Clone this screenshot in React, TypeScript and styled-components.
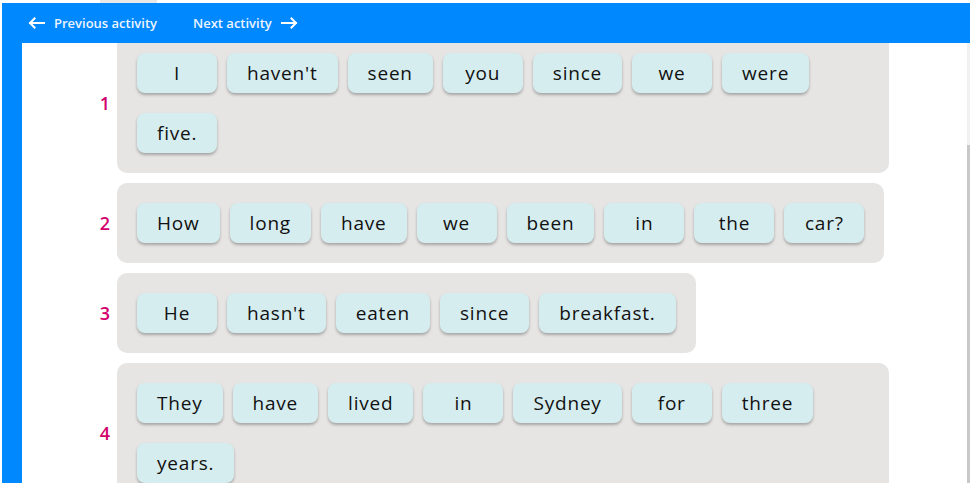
import React from "react";
import styled, { createGlobalStyle } from "styled-components";

const GlobalStyle = createGlobalStyle`
  html, body {
    margin: 0;
    padding: 0;
    background: #ffffff;
    overflow: hidden;
    font-family: "Open Sans", sans-serif;
  }
`;

const TopStrip = styled.div`
  height: 3px;
  display: flex;
`;

const StripTab = styled.div`
  margin-left: 100px;
  width: 57px;
  background: #e8e8e8;
`;

const Frame = styled.div`
  margin-left: 2px;
  height: 480px;
  background: #0088ff;
  display: flex;
  flex-direction: column;
`;

const Header = styled.div`
  height: 40px;
  flex: none;
  display: flex;
  align-items: center;
  padding-left: 26px;
  gap: 36px;
  position: relative;
  z-index: 2;
`;

const NavLink = styled.a`
  display: flex;
  align-items: center;
  gap: 9px;
  color: #eef4ff;
  font-family: "Open Sans", sans-serif;
  font-weight: 600;
  font-size: 13px;
  text-decoration: none;
  cursor: pointer;
`;

const Body = styled.div`
  flex: 1;
  margin-left: 20px;
  background: #ffffff;
  display: flex;
  min-height: 0;
`;

const Main = styled.div`
  flex: 1;
  overflow: hidden;
`;

const List = styled.div`
  display: flex;
  flex-direction: column;
  gap: 10px;
  margin-top: -10px;
`;

const Row = styled.div`
  display: flex;
  align-items: center;
`;

const Num = styled.div`
  width: 88px;
  flex: none;
  padding-right: 7px;
  text-align: right;
  color: #d3006c;
  font-family: "Open Sans", sans-serif;
  font-weight: 600;
  font-size: 18px;
`;

const Panel = styled.div`
  max-width: 732px;
  background: #e6e5e4;
  border-radius: 10px;
  padding: 20px;
  display: flex;
  flex-wrap: wrap;
  column-gap: 10px;
  row-gap: 20px;
`;

const Chip = styled.div`
  min-width: 80px;
  height: 40px;
  box-sizing: border-box;
  padding: 0 20px;
  display: flex;
  align-items: center;
  justify-content: center;
  background: #d6edf0;
  border-radius: 8px;
  box-shadow: 0 2px 3px rgba(0, 0, 0, 0.28);
  color: #111111;
  font-family: "Open Sans", sans-serif;
  font-size: 19px;
  letter-spacing: 0.8px;
`;

const Scrollbar = styled.div`
  width: 3px;
  flex: none;
  background: #f1f1f1;
  display: flex;
  flex-direction: column;
`;

const Thumb = styled.div`
  margin-top: 102px;
  flex: 1;
  background: #c8c8c8;
`;

const Arrow = ({ dir }: { dir: "left" | "right" }) => (
  <svg width="17" height="12" viewBox="0 0 17 12" style={{ transform: dir === "right" ? "scaleX(-1)" : undefined }}>
    <path d="M16 6H2M6.5 1.5L2 6l4.5 4.5" fill="none" stroke="#ffffff" strokeWidth="2" strokeLinecap="square" />
  </svg>
);

const sentences = [
  ["I", "haven't", "seen", "you", "since", "we", "were", "five."],
  ["How", "long", "have", "we", "been", "in", "the", "car?"],
  ["He", "hasn't", "eaten", "since", "breakfast."],
  ["They", "have", "lived", "in", "Sydney", "for", "three", "years."],
];

export default function App() {
  return (
    <>
      <GlobalStyle />
      <TopStrip>
        <StripTab />
      </TopStrip>
      <Frame>
        <Header>
          <NavLink>
            <Arrow dir="left" />
            Previous activity
          </NavLink>
          <NavLink>
            Next activity
            <Arrow dir="right" />
          </NavLink>
        </Header>
        <Body>
          <Main>
            <List>
              {sentences.map((words, i) => (
                <Row key={i}>
                  <Num>{i + 1}</Num>
                  <Panel>
                    {words.map((w, j) => (
                      <Chip key={j}>{w}</Chip>
                    ))}
                  </Panel>
                </Row>
              ))}
            </List>
          </Main>
          <Scrollbar>
            <Thumb />
          </Scrollbar>
        </Body>
      </Frame>
    </>
  );
}
